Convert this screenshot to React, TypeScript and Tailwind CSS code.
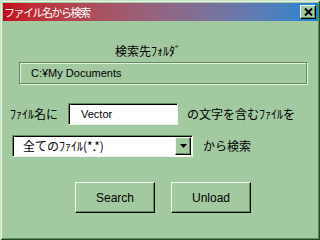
const jp = { fontFamily: '"Noto Sans CJK JP", "Liberation Sans", sans-serif' };
const latin = { fontFamily: '"Liberation Sans", Arial, sans-serif' };

// くぼんだ入力欄 (Win95 風)
const sunken =
  'bg-white border border-t-[#5e8c5c] border-l-[#5e8c5c] border-b-[#f2faf0] border-r-[#f2faf0] shadow-[inset_1px_1px_0_#000]';

// 出っ張ったボタン
const raised =
  'bg-[#a3c9a1] border border-t-[#eef8ec] border-l-[#eef8ec] border-b-[#000] border-r-[#000] shadow-[inset_-1px_-1px_0_#5e8c5c]';

function CloseIcon() {
  return (
    <svg width="9" height="8" viewBox="0 0 9 8">
      <path d="M1 0.5 L8 7.5 M8 0.5 L1 7.5" stroke="#000" strokeWidth="2" />
    </svg>
  );
}

function Arrow() {
  return (
    <svg width="7" height="4" viewBox="0 0 7 4">
      <path d="M0 0 H7 L3.5 4 Z" fill="#000" />
    </svg>
  );
}

export default function App() {
  return (
    <div
      className="w-[320px] h-[240px] bg-[#a3c9a1] flex flex-col pl-[3px] pr-[2px] pt-[3px] text-black shadow-[inset_1px_1px_0_#c9e3c7,inset_-1px_-1px_0_#1e4a1e,inset_2px_2px_0_#e6f2e4,inset_-2px_-2px_0_#5e8c5c]"
      style={jp}
    >
      {/* タイトルバー */}
      <div className="h-[18px] flex items-center bg-linear-to-r from-[#c8001c] to-[#0f86d4] pl-[1px] pr-[2px]">
        <span className="text-white text-[11px] leading-[12px] tracking-[-1.5px]">ファイル名から検索</span>
        <div className={`ml-auto w-[16px] h-[14px] flex items-center justify-center ${raised}`}>
          <CloseIcon />
        </div>
      </div>

      {/* 検索先フォルダ */}
      <div className="mt-[24px] ml-[112px] text-[12px] leading-[12px]">検索先ﾌｫﾙﾀﾞ</div>
      <div className="mt-[5px] ml-[16px] w-[288px] h-[22px] flex items-center pl-[11px] border border-[#5e8c5c] shadow-[inset_1px_1px_0_#e2f0e0,1px_1px_0_#e2f0e0]">
        <span className="text-[11px] leading-[12px]" style={latin}>C:¥My Documents</span>
      </div>

      {/* ファイル名 */}
      <div className="mt-[19px] flex items-center">
        <span className="ml-[7px] w-[58px] text-[12px] leading-[12px]">ﾌｧｲﾙ名に</span>
        <div className={`w-[110px] h-[22px] flex items-center pl-[12px] ${sunken}`}>
          <span className="text-[11px] leading-[12px]" style={latin}>Vector</span>
        </div>
        <span className="ml-[9px] text-[12px] leading-[12px]">の文字を含むﾌｧｲﾙを</span>
      </div>

      {/* 種類 */}
      <div className="mt-[10px] flex items-center">
        <div className={`ml-[9px] w-[181px] h-[22px] flex items-center pl-[10px] pr-[1px] ${sunken}`}>
          <span className="text-[12px] leading-[12px]">全てのﾌｧｲﾙ(*.*)</span>
          <div className={`ml-auto w-[16px] h-[18px] flex items-center justify-center ${raised}`}>
            <Arrow />
          </div>
        </div>
        <span className="ml-[10px] text-[12px] leading-[12px]">から検索</span>
      </div>

      {/* ボタン */}
      <div className="mt-[25px] ml-[72px] flex gap-[16px]">
        <button className={`w-[80px] h-[31px] flex items-center justify-center text-[12px] ${raised}`} style={latin}>
          Search
        </button>
        <button className={`w-[80px] h-[31px] flex items-center justify-center text-[12px] ${raised}`} style={latin}>
          Unload
        </button>
      </div>
    </div>
  );
}
